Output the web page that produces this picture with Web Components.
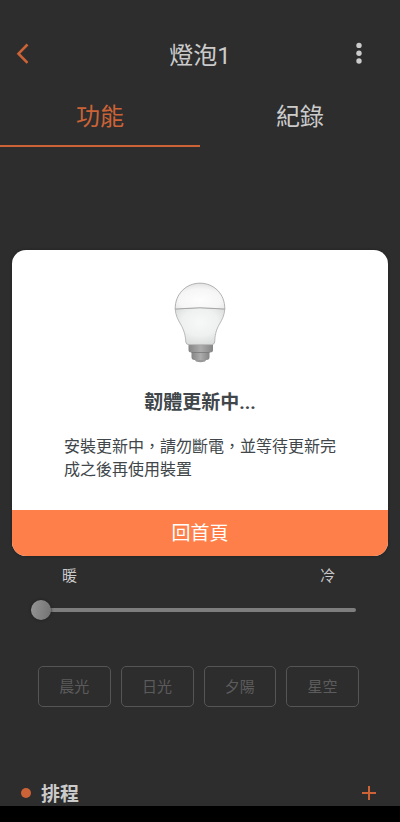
<!DOCTYPE html>
<html lang="zh-Hant">
<head>
<meta charset="utf-8">
<meta name="viewport" content="width=device-width, initial-scale=1">
<title>燈泡1</title>
<style>
  html, body { margin: 0; height: 100%; }
  body {
    background: #000;
    color: #cbcbcb;
    font-family: Roboto, "Noto Sans CJK TC", sans-serif;
    --bg: #2d2d2d;
    --accent: #cc6337;
  }
</style>
</head>
<body>
<device-screen>
  <app-header slot="top" heading="燈泡1"></app-header>
  <tab-bar slot="top"></tab-bar>
  <temperature-slider></temperature-slider>
  <preset-list>
    <preset-button>晨光</preset-button>
    <preset-button>日光</preset-button>
    <preset-button>夕陽</preset-button>
    <preset-button>星空</preset-button>
  </preset-list>
  <schedule-section>排程</schedule-section>
  <update-dialog slot="dialog">
    <bulb-picture slot="picture"></bulb-picture>
    <span slot="title">韌體更新中...</span>
    <span slot="message">安裝更新中，請勿斷電，並等待更新完成之後再使用裝置</span>
    <span slot="action">回首頁</span>
  </update-dialog>
</device-screen>

<script>
const define = (name, html) => {
  const template = document.createElement('template');
  template.innerHTML = html;
  customElements.define(name, class extends HTMLElement {
    constructor() {
      super();
      this.attachShadow({ mode: 'open' }).append(template.content.cloneNode(true));
    }
    connectedCallback() {
      const heading = this.shadowRoot.querySelector('[data-heading]');
      if (heading) heading.textContent = this.getAttribute('heading');
    }
  });
};

define('device-screen', `
  <style>
    :host { display: flex; flex-direction: column; height: 100vh; box-sizing: border-box; padding-bottom: 16px; }
    main { position: relative; flex: 1; min-height: 0; display: flex; flex-direction: column; overflow: hidden; background: var(--bg); }
    .stage { flex: 1; }
    .overlay { position: absolute; inset: 0; display: grid; align-items: center; padding: 0 12px; }
  </style>
  <main>
    <slot name="top"></slot>
    <div class="stage"></div>
    <slot></slot>
    <div class="overlay"><slot name="dialog"></slot></div>
  </main>`);

define('app-header', `
  <style>
    :host { display: grid; grid-template-columns: 58px 1fr 58px; align-items: center; height: 48px; padding-top: 30px; }
    h1 { margin: 0; padding-top: 4px; font-size: 24px; line-height: 32px; font-weight: 400; text-align: center; }
    button { border: 0; padding: 0; background: none; color: inherit; height: 48px; }
    .back { color: var(--accent); padding-left: 14px; }
    .more { padding-left: 14px; }
    svg { display: block; }
  </style>
  <button class="back" aria-label="返回"><svg width="18" height="24" viewBox="0 0 18 24"><path d="M13.500 2.500 4.500 11.700l9 9.200" fill="none" stroke="currentColor" stroke-width="2.600"/></svg></button>
  <h1 data-heading></h1>
  <button class="more" aria-label="更多"><svg width="6" height="24" viewBox="0 0 6 24"><g fill="currentColor"><circle cx="3" cy="3.400" r="2.700"/><circle cx="3" cy="11.200" r="2.700"/><circle cx="3" cy="19" r="2.700"/></g></svg></button>`);

define('tab-bar', `
  <style>
    :host { display: grid; grid-template-columns: 1fr 1fr; margin-top: 10px; }
    button { font: inherit; font-size: 24px; line-height: 32px; color: inherit; background: none; border: 0; border-bottom: 2px solid transparent; padding: 13px 0 12px; }
    button[aria-selected=true] { color: var(--accent); border-color: var(--accent); }
  </style>
  <button role="tab" aria-selected="true">功能</button>
  <button role="tab" aria-selected="false">紀錄</button>`);

define('temperature-slider', `
  <style>
    :host { display: block; padding: 0 44px 0 31px; }
    .labels { display: flex; justify-content: space-between; padding: 0 21px 0 31px; font-size: 15px; line-height: 20px; }
    input { appearance: none; -webkit-appearance: none; display: block; width: 100%; height: 20px; margin: 14px 0 0; background: none; }
    input::-webkit-slider-runnable-track { height: 4px; border-radius: 2px; background: #7e7e7e; }
    input::-webkit-slider-thumb { -webkit-appearance: none; width: 20px; height: 20px; margin-top: -8px; border-radius: 50%; background: linear-gradient(100deg, #959595, #727272); box-shadow: 0 0 3px #1c1c1c; }
  </style>
  <div class="labels"><span>暖</span><span>冷</span></div>
  <input type="range" min="0" max="100" value="0" aria-label="色溫">`);

define('preset-list', `
  <style>
    :host { display: grid; grid-template-columns: repeat(4, 1fr); gap: 10px; padding: 46px 41px 0 38px; }
  </style>
  <slot></slot>`);

define('preset-button', `
  <style>
    :host { display: block; }
    button { display: block; width: 100%; font: inherit; font-size: 15px; line-height: 21px; padding: 10px 0 8px; border: 1px solid #555; border-radius: 5px; background: none; color: #5c5c5c; }
  </style>
  <button disabled><slot></slot></button>`);

define('schedule-section', `
  <style>
    :host { display: flex; align-items: center; gap: 10px; padding: 73px 23px 0 21px; }
    .dot { width: 10px; height: 10px; border-radius: 50%; background: var(--accent); }
    h2 { flex: 1; margin: 0; padding-top: 4px; font-size: 19px; line-height: 22px; font-weight: 700; }
    button { border: 0; padding: 0; background: none; color: var(--accent); }
    svg { display: block; }
  </style>
  <span class="dot"></span>
  <h2><slot></slot></h2>
  <button aria-label="新增"><svg width="16" height="16" viewBox="0 0 16 16"><path d="M8 1v14M1 8h14" stroke="currentColor" stroke-width="2"/></svg></button>`);

define('update-dialog', `
  <style>
    :host { display: block; border-radius: 14px; overflow: hidden; background: #fff; color: #40464a; box-shadow: 0 0 3px #1f1f1f; }
    .picture { display: flex; justify-content: center; padding-top: 32px; }
    h2 { margin: 26px 0 0; font-size: 19px; line-height: 28px; font-weight: 700; text-align: center; }
    p { margin: 0; padding: 18px 50px 29px 52px; font-size: 16px; line-height: 23px; }
    button { display: block; width: 100%; border: 0; padding: 10px 0 8px; background: #ff7f4a; color: #fff; font: inherit; font-size: 19px; line-height: 28px; }
  </style>
  <div role="dialog" aria-labelledby="t">
    <div class="picture"><slot name="picture"></slot></div>
    <h2 id="t"><slot name="title"></slot></h2>
    <p><slot name="message"></slot></p>
    <button><slot name="action"></slot></button>
  </div>`);

define('bulb-picture', `
  <style>:host { display: block; } svg { display: block; }</style>
  <svg width="52" height="81" viewBox="0 0 52 81" aria-hidden="true">
    <defs>
      <radialGradient id="dome" cx=".5" cy=".65" r=".65"><stop offset="0" stop-color="#fdfdfd"/><stop offset=".65" stop-color="#f6f6f6"/><stop offset="1" stop-color="#e2e2e2"/></radialGradient>
      <radialGradient id="body" cx=".5" cy=".4" r=".6"><stop offset="0" stop-color="#f7f8f8"/><stop offset=".6" stop-color="#eff0f0"/><stop offset="1" stop-color="#dcdedd"/></radialGradient>
      <linearGradient id="metal"><stop offset="0" stop-color="#858585"/><stop offset=".5" stop-color="#acacac"/><stop offset="1" stop-color="#858585"/></linearGradient>
    </defs>
    <path d="M20 77h13l-2 2.500q-4.500 1.500-9 0z" fill="#999"/>
    <path d="M17.500 69h18v6q0 3-3 3h-12q-3 0-3-3z" fill="url(#metal)"/>
    <path d="M14.500 62.500h24.500v5.500q0 2.500-3 2.500H17.500q-3 0-3-2.500z" fill="url(#metal)"/>
    <path d="M17.500 70.500h18" stroke="#777" stroke-width=".8"/>
    <path d="M1.200 27C1.500 33 4 38 6.500 42C10.500 49 11.400 54 11.800 60q.2 2.500 3.200 2.700h22.500q3-.2 3.200-2.700C41 54 41.500 49 45.500 42C48 38 50.500 33 50.800 27q-24.800-2.600-49.600 0z" fill="url(#body)" stroke="#aaa" stroke-width=".8"/>
    <path d="M1.200 27C1 12 12 1.200 26 1.200S51 12 50.800 27q-24.800-2.600-49.600 0z" fill="url(#dome)" stroke="#a0a0a0" stroke-width=".8"/>
  </svg>`);
</script>
</body>
</html>
